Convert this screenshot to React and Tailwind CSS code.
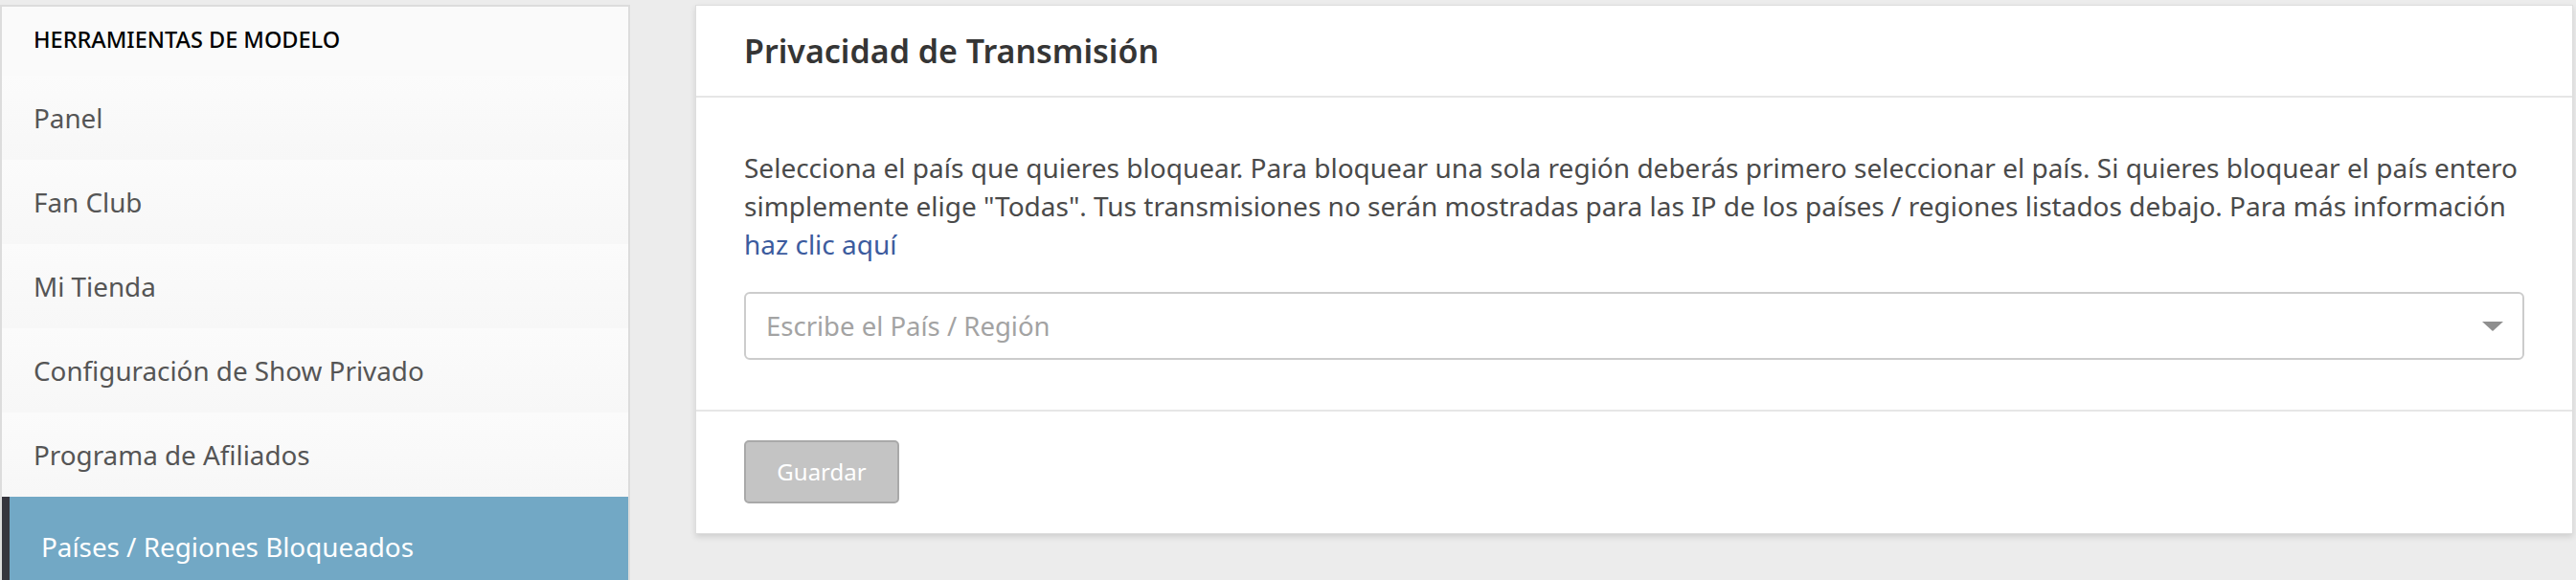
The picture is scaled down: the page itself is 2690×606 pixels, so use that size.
import React from "react";

const menuItems = [
  "Panel",
  "Fan Club",
  "Mi Tienda",
  "Configuración de Show Privado",
  "Programa de Afiliados",
];

function Sidebar() {
  return (
    <div className="w-[658px] shrink-0 bg-[#f9f9f9] border-t-2 border-l-2 border-r-2 border-[#dcdcdc] flex flex-col">
      {/* header */}
      <div className="h-[72px] shrink-0 flex items-center px-[33px] pb-[2px] bg-[#fafafa] text-[23.5px] font-medium text-black">
        HERRAMIENTAS DE MODELO
      </div>

      {/* items */}
      {menuItems.map((item) => (
        <div
          key={item}
          className="h-[88px] shrink-0 flex items-center px-[33px] pt-[2px] bg-gradient-to-b from-[#fbfbfb] to-[#f7f7f7] text-[27.8px] text-[#555555]"
        >
          {item}
        </div>
      ))}

      {/* active item */}
      <div className="h-[106px] shrink-0 flex items-center bg-[#72a8c5] border-l-[8px] border-[#35353d] px-[33px] text-[27.8px] text-white">
        Países / Regiones Bloqueados
      </div>
    </div>
  );
}

function PrivacyCard() {
  return (
    <div className="flex-1 self-start bg-white border border-[#dddddd] shadow-[0_3px_6px_rgba(0,0,0,0.12)]">
      {/* title */}
      <div className="h-[96px] flex items-center px-[50px] border-b-2 border-[#e6e6e6]">
        <h2 className="text-[34px] font-semibold text-[#353535]">Privacidad de Transmisión</h2>
      </div>

      {/* body */}
      <div className="px-[50px] pt-[53px] pb-[52px] border-b-2 border-[#e6e6e6]">
        <p className="text-[28px] leading-[40px] text-[#4a4a4a]">
          Selecciona el país que quieres bloquear. Para bloquear una sola región deberás primero
          seleccionar el país. Si quieres bloquear el país entero simplemente elige "Todas". Tus
          transmisiones no serán mostradas para las IP de los países / regiones listados debajo. Para
          más información <a className="text-[#3c5b9e]">haz clic aquí</a>
        </p>

        <div className="mt-[30px] h-[71px] flex items-center justify-between border-2 border-[#cccccc] rounded-[6px] pl-[21px] pr-[20px]">
          <span className="text-[27.5px] text-[#a3a3a3]">Escribe el País / Región</span>
          <svg width="22" height="10" viewBox="0 0 22 10">
            <path d="M0 0 L22 0 L11 10 Z" fill="#8f8f8f" />
          </svg>
        </div>
      </div>

      {/* footer */}
      <div className="px-[50px] pt-[30px] pb-[31px]">
        <button className="w-[162px] h-[66px] bg-[#c4c4c4] border-2 border-[#a9a9a9] rounded-[5px] text-[24px] text-white">
          Guardar
        </button>
      </div>
    </div>
  );
}

export default function App() {
  return (
    <div
      className="h-[606px] w-[2690px] overflow-hidden bg-[#ececec] flex gap-[68px] pt-[5px] pr-[3px]"
      style={{ fontFamily: '"Noto Sans", "Open Sans", sans-serif' }}
    >
      <Sidebar />
      <PrivacyCard />
    </div>
  );
}
